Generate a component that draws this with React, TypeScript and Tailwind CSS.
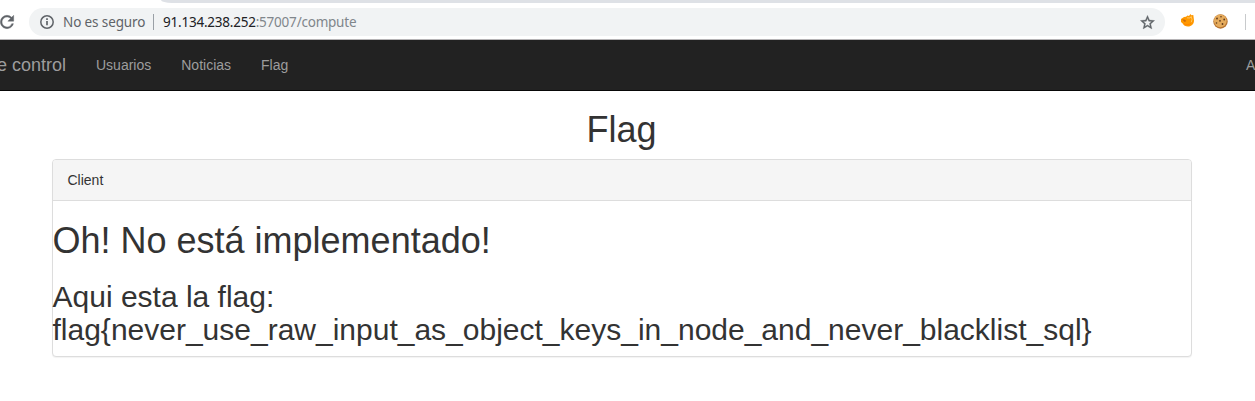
import React from "react";

function Reload() {
  return (
    <svg className="h-5 w-5 shrink-0" viewBox="0 0 24 24" fill="#5f6368" stroke="#5f6368" strokeWidth=".5">
      <path d="M17.65 6.35A7.958 7.958 0 0 0 12 4a8 8 0 1 0 7.73 10h-2.08A5.99 5.99 0 0 1 12 18a6 6 0 1 1 0-12c1.66 0 3.14.69 4.22 1.78L13 11h7V4l-2.35 2.35z" />
    </svg>
  );
}

function Info() {
  return (
    <svg className="h-4 w-4 shrink-0" viewBox="0 0 16 16" fill="none" stroke="#5f6368">
      <circle cx="8" cy="8" r="6.2" strokeWidth="1.5" />
      <path d="M8 7v4.200M8 4.300v1.600" strokeWidth="1.700" />
    </svg>
  );
}

function Star() {
  return (
    <svg className="h-[17px] w-[17px] shrink-0" viewBox="0 0 24 24" fill="#5f6368" stroke="#5f6368" strokeWidth=".5">
      <path d="M22 9.24l-7.19-.62L12 2 9.19 8.63 2 9.24l5.46 4.73L5.82 21 12 17.27 18.18 21l-1.63-7.03L22 9.24zM12 15.4l-3.76 2.27 1-4.28-3.32-2.88 4.38-.38L12 6.1l1.71 4.04 4.38.38-3.32 2.88 1 4.28L12 15.4z" />
    </svg>
  );
}

function Fox() {
  return (
    <svg className="-mt-[3px] h-[15px] w-[15px] shrink-0" viewBox="0 0 15 15">
      <path d="M1 6l3-2 2-.2L7.500 2.500l1.500.5L10.500 1l.8 1.300L13.300 2l.7 5.500c0 3.600-2.500 6-6 6-2.600 0-4.400-1.200-5.300-3L1 9z" fill="#ff9800" />
      <path d="M7 4.800l3 .2L11.200 3.500l.8 3-.7 2.700" fill="none" stroke="#ffd27a" strokeWidth=".8" />
      <path d="M2 6.300l3 .4 1.300 1.400L4.700 9z" fill="#c8690c" />
      <path d="M4 10.800c2 1.300 5 1.300 7-.6" fill="none" stroke="#ff7f00" strokeWidth=".8" />
    </svg>
  );
}

function Cookie() {
  return (
    <svg className="-mt-0.5 h-[15px] w-[15px] shrink-0" viewBox="0 0 15 15">
      <circle cx="7.500" cy="7.500" r="7.200" fill="#b87430" />
      <circle cx="7.300" cy="6.800" r="6.400" fill="#e5ab5c" />
      <g fill="#603a1b">
        <circle cx="4" cy="4.500" r=".9" />
        <circle cx="8" cy="2.800" r=".8" />
        <circle cx="11.200" cy="5.500" r=".9" />
        <circle cx="7" cy="6.800" r=".9" />
        <circle cx="3.500" cy="9" r=".8" />
        <circle cx="9.500" cy="10" r=".9" />
      </g>
    </svg>
  );
}

export default function App() {
  return (
    <div className="h-[401px] w-full overflow-hidden bg-white font-['Liberation_Sans',Arial,sans-serif] text-sm leading-5 text-[#333]">
      <header className="flex h-10 flex-col border-b border-[#b6b4b6] bg-white">
        <div className="flex h-[3px] justify-end">
          <div className="h-full w-[1094px] bg-[#dee1e6] [border-bottom-left-radius:11px_3px]" />
        </div>
        <div className="flex h-9 items-center pt-0.5">
          <div className="-ml-[3px] flex w-8 shrink-0">
            <Reload />
          </div>
          <div className="flex h-7 w-[1136px] shrink-0 items-center rounded-full bg-[#f1f3f4] pl-2.5 pr-[9px] font-['Noto_Sans',sans-serif] text-[13.5px]">
            <Info />
            <span className="ml-2 w-[82px] whitespace-nowrap tracking-[-0.12px] text-[#5f6368]">No es seguro</span>
            <span className="ml-2 h-4 w-px bg-[#9aa0a6]" />
            <span className="ml-[9px] whitespace-nowrap tracking-[-0.22px] text-[#80868b]">
              <span className="text-[#202124]">91.134.238.252</span>:57007/compute
            </span>
            <div className="ml-auto">
              <Star />
            </div>
          </div>
          <div className="ml-[15px] flex items-center gap-[18px]">
            <Fox />
            <Cookie />
          </div>
          <span className="ml-[17px] h-4 w-px shrink-0 bg-[#c8cacc]" />
        </div>
      </header>

      <nav className="flex h-[51px] items-center overflow-hidden border-b border-[#080808] bg-[#222] text-[#9d9d9d]">
        <div className="flex w-[66px] shrink-0 justify-end">
          <span className="whitespace-nowrap text-lg">e control</span>
        </div>
        <div className="ml-[30px] flex gap-[30px]">
          <span>Usuarios</span>
          <span>Noticias</span>
          <span>Flag</span>
        </div>
        <span className="ml-auto w-[9px] whitespace-nowrap">A</span>
      </nav>

      <main className="ml-[51.5px] w-[1140px] pt-[19px]">
        <h1 className="mb-[9px] text-center text-4xl leading-[40px]">Flag</h1>
        <section className="h-[198px] rounded border border-[#ddd] bg-white shadow-[0_1px_1px_rgba(0,0,0,0.05)]">
          <div className="h-[41px] rounded-t-[3px] border-b border-[#ddd] bg-[#f5f5f5] px-[15px] py-2.5">Client</div>
          <h1 className="mt-5 text-4xl leading-[40px]">Oh! No está implementado!</h1>
          <h2 className="mt-[19px] text-3xl leading-[33px]">
            Aqui esta la flag:
            <br />
            flag&#123;never_use_raw_input_as_object_keys_in_node_and_never_blacklist_sql&#125;
          </h2>
        </section>
      </main>
    </div>
  );
}
